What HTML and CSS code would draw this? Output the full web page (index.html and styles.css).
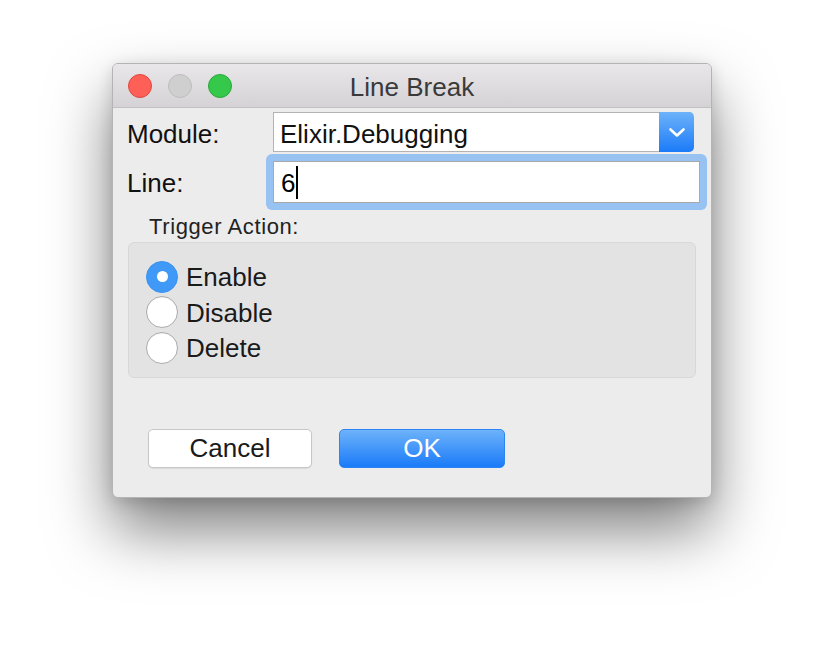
FILE: index.html
```html
<!DOCTYPE html>
<html>
<head>
<meta charset="utf-8">
<title>Line Break</title>
<link rel="stylesheet" href="styles.css">
</head>
<body>
<div class="window">
  <div class="titlebar">
    <div class="lights">
      <span class="light red"></span>
      <span class="light gray"></span>
      <span class="light green"></span>
    </div>
    <div class="title">Line Break</div>
  </div>
  <div class="content">
    <div class="row row-module">
      <label class="label">Module:</label>
      <div class="popup">
        <span class="popup-text">Elixir.Debugging</span>
        <span class="popup-arrow">
          <svg width="18" height="11" viewBox="0 0 18 11"><polyline points="2.5,2.5 9,8.5 15.5,2.5" fill="none" stroke="#fff" stroke-width="2.6" stroke-linecap="round" stroke-linejoin="round"/></svg>
        </span>
      </div>
    </div>
    <div class="row row-line">
      <label class="label">Line:</label>
      <div class="focus-ring">
        <div class="textfield"><span class="value">6</span><span class="caret"></span></div>
      </div>
    </div>
    <div class="group-title">Trigger Action:</div>
    <div class="group">
      <div class="radio-row"><span class="radio checked"></span><span class="radio-label">Enable</span></div>
      <div class="radio-row"><span class="radio"></span><span class="radio-label">Disable</span></div>
      <div class="radio-row"><span class="radio"></span><span class="radio-label">Delete</span></div>
    </div>
    <div class="buttons">
      <button class="btn cancel">Cancel</button>
      <button class="btn ok">OK</button>
    </div>
  </div>
</div>
</body>
</html>
```

FILE: styles.css
```css
html, body {
  margin: 0;
  padding: 0;
  background: #ffffff;
}
html {
  height: 100%;
}
body {
  min-height: 658px;
  box-sizing: border-box;
  padding: 63px 0 0 112px;
  font-family: "Liberation Sans", Arial, sans-serif;
  color: #1c1c1c;
}
.window {
  width: 598px;
  height: 433px;
  border: 1px solid #b4b4b4;
  border-radius: 6px;
  background: #ececec;
  box-shadow: 0 32px 62px rgba(0,0,0,0.5), 0 4px 16px rgba(0,0,0,0.14);
  overflow: hidden;
}
.titlebar {
  height: 43px;
  border-bottom: 1px solid #c2c0c2;
  background: linear-gradient(#e9e7e9, #d4d2d4);
  display: flex;
  align-items: center;
  position: relative;
}
.lights {
  display: flex;
  gap: 16px;
  padding-left: 15px;
}
.light {
  width: 22px;
  height: 22px;
  border-radius: 50%;
  border: 1px solid;
}
.red { background: #fe5f57; border-color: #e1463f; }
.gray { background: #cfcfcf; border-color: #bdbdbd; }
.green { background: #35c84b; border-color: #29a83c; }
.title {
  position: absolute;
  left: 0;
  right: 0;
  top: 0;
  height: 43px;
  line-height: 43px;
  padding-top: 2px;
  text-align: center;
  font-size: 26px;
  color: #3a3a3a;
}
.content {
  padding: 4px 0 0 12px;
}
.row {
  display: flex;
  align-items: center;
}
.label {
  width: 148px;
  padding-left: 2px;
  box-sizing: border-box;
  font-size: 26px;
  color: #111;
}
.row-module .label { padding-top: 4px; }
.popup {
  width: 420px;
  height: 38px;
  border: 1px solid #b3b3b3;
  border-right: none;
  border-radius: 0 5px 5px 0;
  background: #fff;
  display: flex;
  align-items: center;
}
.popup-text {
  flex: 1;
  font-size: 26px;
  padding: 4px 0 0 6px;
  color: #111;
}
.popup-arrow {
  width: 35px;
  height: 40px;
  margin: -1px 0;
  border-radius: 0 5px 5px 0;
  background: linear-gradient(#6db2fa, #1b7bf8);
  display: flex;
  align-items: center;
  justify-content: center;
}
.row-line {
  margin-top: 2px;
}
.row-line .label { padding-top: 2px; }
.focus-ring {
  margin-left: -7px;
  width: 427px;
  padding: 7px;
  border-radius: 6px;
  background: #97c2f1;
}
.textfield {
  border: 1px solid #a9a9a9;
  background: #fff;
  display: flex;
  align-items: center;
  padding: 2px 0 0 7px;
  box-sizing: border-box;
  height: 42px;
  font-size: 26px;
  color: #000;
}
.caret {
  width: 2px;
  height: 33px;
  background: #000;
  margin-left: 1px;
  margin-top: -2px;
}
.group-title {
  height: 32px;
  line-height: 30px;
  padding-top: 2px;
  box-sizing: border-box;
  margin-left: 24px;
  font-size: 22px;
  letter-spacing: 0.6px;
  color: #222;
}
.group {
  margin-left: 3px;
  width: 568px;
  height: 136px;
  box-sizing: border-box;
  border: 1px solid #d8d8d8;
  border-radius: 6px;
  background: #e3e3e3;
  padding: 16px 0 0 17px;
}
.radio-row {
  display: flex;
  align-items: center;
  height: 35.5px;
  gap: 8px;
}
.radio {
  width: 30px;
  height: 30px;
  border-radius: 50%;
  background: #fff;
  border: 1px solid #ababab;
  box-shadow: inset 0 1px 1px rgba(0,0,0,0.05);
  position: relative;
}
.radio.checked {
  border-color: #3b93f3;
  background: #4099f7;
  box-shadow: none;
}
.radio.checked::after {
  content: "";
  position: absolute;
  width: 11px;
  height: 11px;
  left: 9.5px;
  top: 9.5px;
  border-radius: 50%;
  background: #fff;
}
.radio-label {
  font-size: 26px;
  color: #1a1a1a;
  padding-top: 2px;
}
.buttons {
  display: flex;
  gap: 27px;
  margin: 51px 0 0 23px;
}
.btn {
  font-family: "Liberation Sans", Arial, sans-serif;
  font-size: 26px;
  height: 39px;
  border-radius: 5px;
  padding: 0;
  line-height: 37px;
  box-sizing: border-box;
}
.cancel {
  width: 164px;
  background: #fff;
  color: #1a1a1a;
  border: 1px solid #c6c6c6;
  box-shadow: 0 1px 1px rgba(0,0,0,0.08);
}
.ok {
  width: 166px;
  color: #fff;
  border: 1px solid #2c85f2;
  background: linear-gradient(#6db2fa, #1a7bf8);
}
```
